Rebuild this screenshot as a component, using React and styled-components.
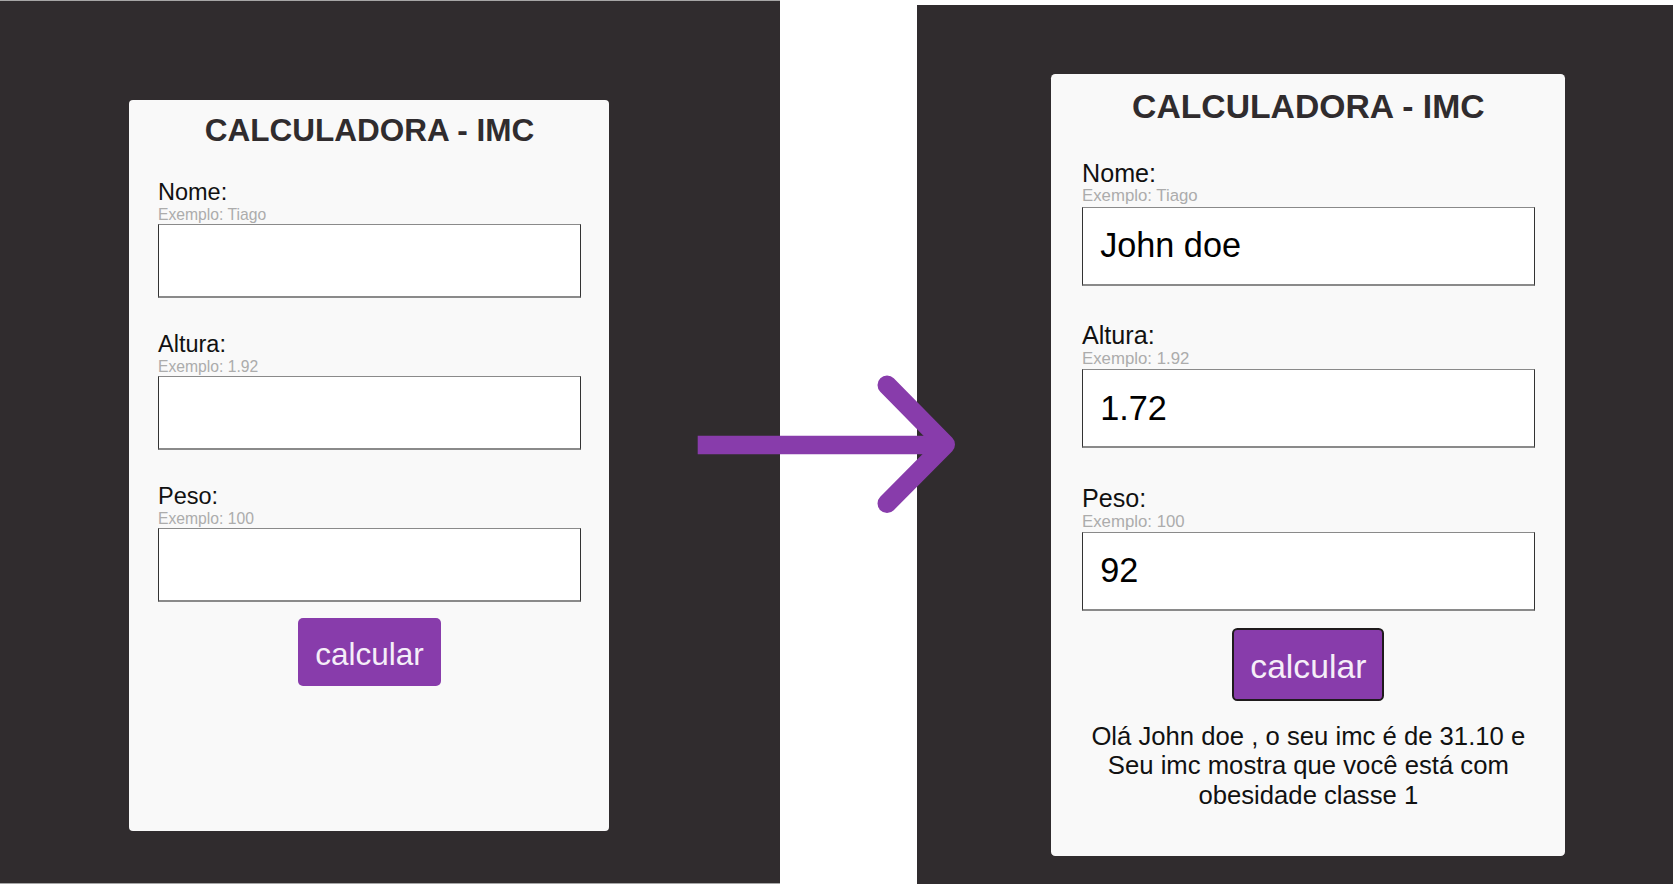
import React from 'react';
import styled, { createGlobalStyle } from 'styled-components';

const GlobalStyle = createGlobalStyle`
  html, body {
    margin: 0;
    padding: 0;
    background: #ffffff;
    font-family: "Liberation Sans", Arial, sans-serif;
  }
`;

const Page = styled.div`
  position: relative;
  display: flex;
  height: 884px;
  overflow: hidden;
`;

const Panel = styled.div`
  box-sizing: border-box;
  background: #302c2e;
  width: ${p => p.$width || 'auto'};
  flex: ${p => (p.$grow ? 1 : 'none')};
  margin-top: ${p => p.$offset || 0}px;
  padding: ${p => p.$pad};
  border-top: ${p => (p.$edge ? '1px solid #a6a6a6' : 'none')};
  border-bottom: ${p => (p.$edge ? '1px solid #a6a6a6' : 'none')};
`;

const Gap = styled.div`
  width: 137px;
  flex: none;
`;

const Card = styled.div`
  zoom: ${p => p.$zoom};
  box-sizing: border-box;
  width: 480px;
  height: 731px;
  display: flex;
  flex-direction: column;
  padding: 15px 28px 0 29px;
  background: #f9f9f9;
  border-radius: 4px;
`;

const Title = styled.h1`
  margin: 0;
  text-align: center;
  font-size: 31.5px;
  font-weight: 700;
  color: #302c2e;
  line-height: 31px;
`;

const Field = styled.div`
  display: flex;
  flex-direction: column;
  margin-top: 32px;
`;

const Label = styled.label`
  padding-top: 2px;
  font-size: 23.5px;
  line-height: 25px;
  color: #111;
`;

const Hint = styled.span`
  padding-top: 1px;
  font-size: 15.7px;
  line-height: 17px;
  color: #acacac;
  margin-bottom: 1px;
`;

const Input = styled.input`
  box-sizing: border-box;
  width: 100%;
  height: 74px;
  margin: 0;
  padding: 0 16px;
  background: #fff;
  border: 1px solid #333;
  border-top-color: #8a8a8a;
  border-bottom: 2px solid #8a8a8a;
  font-family: inherit;
  font-size: 32px;
  color: #000;
  outline: none;
`;

const Button = styled.button`
  align-self: center;
  margin-top: 16px;
  padding: 16px 15px 12px;
  background: #883cab;
  border: 2px solid ${p => (p.$active ? '#1f1b1d' : 'transparent')};
  border-radius: 5px;
  font-family: inherit;
  font-size: 31.5px;
  line-height: 36px;
  color: #f5eef8;
  cursor: pointer;
`;

const Result = styled.p`
  margin: 20px 0 0;
  text-align: center;
  font-size: 24px;
  line-height: 27.6px;
  color: #111;
`;

const Arrow = styled.svg`
  position: absolute;
  left: 680px;
  top: 360px;
  width: 290px;
  height: 170px;
`;

const fields = [
  { label: 'Nome:', hint: 'Exemplo: Tiago', key: 'nome' },
  { label: 'Altura:', hint: 'Exemplo: 1.92', key: 'altura' },
  { label: 'Peso:', hint: 'Exemplo: 100', key: 'peso' },
];

function Calculator({ zoom = 1, values = {}, result, active }) {
  return (
    <Card $zoom={zoom}>
      <Title>CALCULADORA - IMC</Title>
      {fields.map(f => (
        <Field key={f.key}>
          <Label>{f.label}</Label>
          <Hint>{f.hint}</Hint>
          <Input defaultValue={values[f.key] || ''} />
        </Field>
      ))}
      <Button $active={active}>calcular</Button>
      {result && <Result>{result}</Result>}
    </Card>
  );
}

export default function App() {
  return (
    <Page>
      <GlobalStyle />
      <Panel $width="780px" $pad="99px 0 0 129px" $edge>
        <Calculator />
      </Panel>
      <Gap />
      <Panel $grow $offset={5} $pad="69px 0 0 134px">
        <Calculator
          zoom={1.07}
          active
          values={{ nome: 'John doe', altura: '1.72', peso: '92' }}
          result="Olá John doe , o seu imc é de 31.10 e Seu imc mostra que você está com obesidade classe 1"
        />
      </Panel>
      <Arrow viewBox="0 0 290 170">
        <line x1="17.7" y1="85" x2="262" y2="85" stroke="#883cab" strokeWidth="18.7" />
        <polyline
          points="207,25 265.5,84.5 207,143.5"
          fill="none"
          stroke="#883cab"
          strokeWidth="19"
          strokeLinecap="round"
          strokeLinejoin="round"
        />
      </Arrow>
    </Page>
  );
}
